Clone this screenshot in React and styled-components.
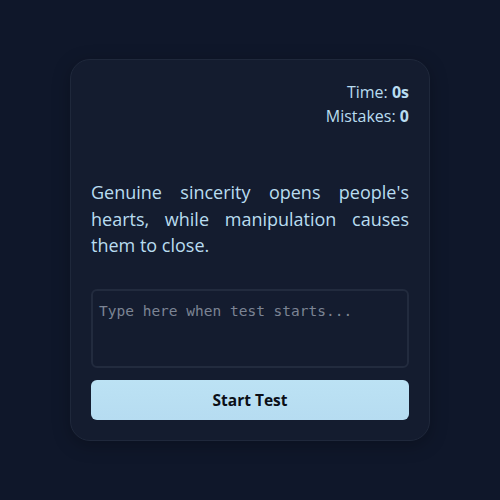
import styled, { createGlobalStyle } from "styled-components";

const GlobalStyle = createGlobalStyle`
  html, body {
    margin: 0;
    padding: 0;
    background: #0f172a;
  }
  body {
    font-family: 'Open Sans', 'Noto Sans', sans-serif;
  }
`;

const Page = styled.div`
  width: 100%;
  height: 100vh;
  display: flex;
  align-items: center;
  justify-content: center;
  background: #0f172a;
`;

const Card = styled.div`
  box-sizing: border-box;
  width: 360px;
  height: 382px;
  padding: 20px;
  background: #141c2f;
  border: 1px solid #1f283b;
  border-radius: 20px;
  box-shadow: 0 4px 18px rgba(0, 0, 0, 0.25);
  display: flex;
  flex-direction: column;
  color: #b9dcf0;
`;

const Stats = styled.div`
  display: flex;
  flex-direction: column;
  align-items: flex-end;
  font-size: 16px;
  line-height: 24px;
  b {
    font-weight: 700;
  }
`;

const Quote = styled.p`
  margin: 51px 0 0;
  font-size: 18px;
  line-height: 26.5px;
  text-align: justify;
`;

const Input = styled.textarea`
  box-sizing: border-box;
  margin-top: 30px;
  width: 100%;
  height: 80px;
  padding: 10px 6px;
  resize: none;
  background: #141c2f;
  border: 2px solid #222b3e;
  border-radius: 6px;
  color: #b9dcf0;
  font-family: 'DejaVu Sans Mono', monospace;
  font-size: 14.5px;
  line-height: 20px;
  outline: none;
  &::placeholder {
    color: #7c8494;
  }
`;

const Button = styled.button`
  margin-top: 12px;
  width: 100%;
  height: 40px;
  border: none;
  border-radius: 6px;
  background: linear-gradient(180deg, #bce2f4, #b6dcf1);
  color: #0b0f17;
  font-family: 'Open Sans', 'Noto Sans', sans-serif;
  font-size: 15.5px;
  font-weight: 700;
  cursor: pointer;
`;

const App = () => {
  return (
    <>
      <GlobalStyle />
      <Page>
        <Card>
          <Stats>
            <span>Time: <b>0s</b></span>
            <span>Mistakes: <b>0</b></span>
          </Stats>
          <Quote>
            Genuine sincerity opens people's hearts, while manipulation causes them to close.
          </Quote>
          <Input placeholder="Type here when test starts..." disabled />
          <Button>Start Test</Button>
        </Card>
      </Page>
    </>
  );
};

export default App;
